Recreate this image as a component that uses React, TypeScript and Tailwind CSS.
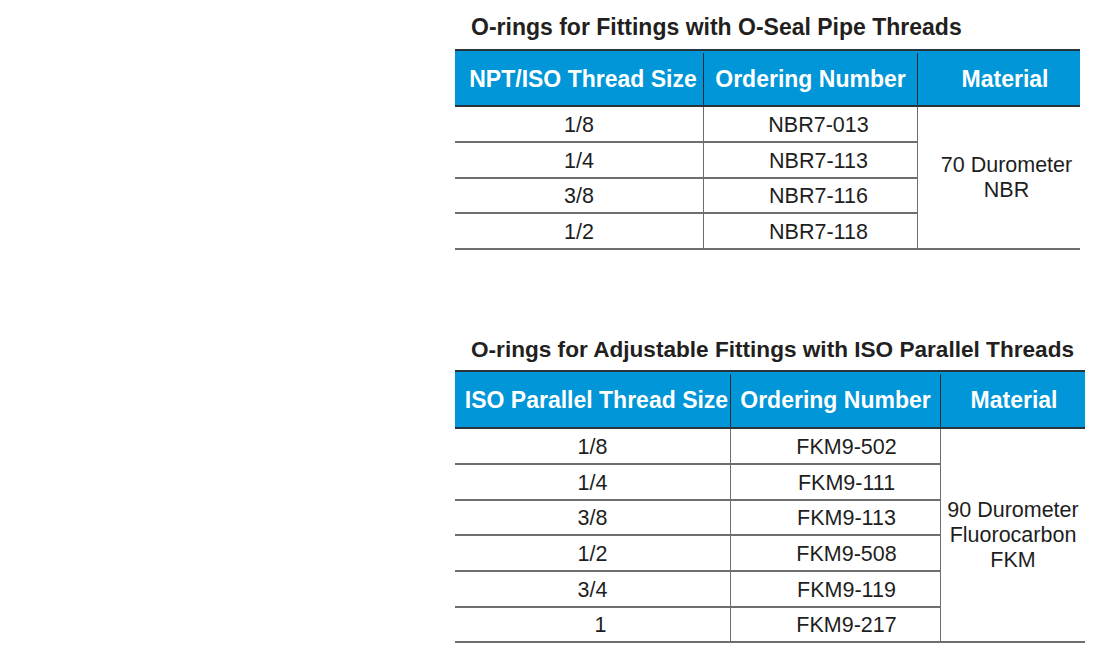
import React from "react";

const font = { fontFamily: '"Liberation Sans", Arial, sans-serif' };

function Cell({ children, className = "" }: { children: React.ReactNode; className?: string }) {
  return <div className={`flex items-center justify-center ${className}`}>{children}</div>;
}

export default function App() {
  const t1 = [
    ["1/8", "NBR7-013"],
    ["1/4", "NBR7-113"],
    ["3/8", "NBR7-116"],
    ["1/2", "NBR7-118"],
  ];
  const t2 = [
    ["1/8", "FKM9-502"],
    ["1/4", "FKM9-111"],
    ["3/8", "FKM9-113"],
    ["1/2", "FKM9-508"],
    ["3/4", "FKM9-119"],
    ["1", "FKM9-217"],
  ];
  const rowLine = "border-b-2 border-[#6e6e6e]";
  const colLine = "border-l border-[#1f1f1f]";
  return (
    <div className="min-h-[647px] w-[1095px] bg-white text-[#1e1e1e]" style={font}>
      <div className="ml-[455px] flex flex-col">
        {/* Table 1 */}
        <div className="mt-[13px] pl-[16px] text-[23px] font-bold leading-[28px] text-[#231f20]">
          O-rings for Fittings with O-Seal Pipe Threads
        </div>
        <div className="mt-[8px] w-[625px]">
          <div className="grid h-[58px] grid-cols-[248px_214px_163px] border-t-2 border-b-2 border-[#28343c] bg-[#0096d8] pt-[2px] text-[23px] font-bold text-white">
            <Cell className="pl-[8px]">NPT/ISO Thread Size</Cell>
            <Cell className="border-l border-[#1d2a33]">Ordering Number</Cell>
            <Cell className="border-l border-[#1d2a33] pl-[12px]">Material</Cell>
          </div>
          <div className="grid grid-cols-[248px_214px_163px] grid-rows-[36px_36px_35px_36px] text-[21.5px]">
            <div className={`col-start-3 row-start-1 row-span-4 flex flex-col items-center justify-center pl-[15px] leading-[25px] ${colLine} ${rowLine}`}>
              <span>70 Durometer</span>
              <span>NBR</span>
            </div>
            {t1.map(([a, b]) => (
              <React.Fragment key={b}>
                <Cell className={`${rowLine} pt-[2px]`}>{a}</Cell>
                <Cell className={`${colLine} ${rowLine} pl-[16px] pt-[2px]`}>{b}</Cell>
              </React.Fragment>
            ))}
          </div>
        </div>

        {/* Table 2 */}
        <div className="mt-[86px] pl-[16px] text-[22.6px] font-bold leading-[28px] text-[#231f20]">
          O-rings for Adjustable Fittings with ISO Parallel Threads
        </div>
        <div className="mt-[6px] w-[630px]">
          <div className="grid h-[59px] grid-cols-[275px_210px_145px] border-t-2 border-b-2 border-[#28343c] bg-[#0096d8] pt-[2px] text-[23px] font-bold text-white">
            <Cell className="pl-[8px]">ISO Parallel Thread Size</Cell>
            <Cell className="border-l border-[#1d2a33]">Ordering Number</Cell>
            <Cell className="border-l border-[#1d2a33] pl-[2px]">Material</Cell>
          </div>
          <div className="grid grid-cols-[275px_210px_145px] grid-rows-[36px_36px_35px_36px_36px_35px] text-[21.5px]">
            <div className={`col-start-3 row-start-1 row-span-6 flex flex-col items-center justify-center leading-[25px] ${colLine} ${rowLine}`}>
              <span>90 Durometer</span>
              <span>Fluorocarbon</span>
              <span>FKM</span>
            </div>
            {t2.map(([a, b]) => (
              <React.Fragment key={b}>
                <Cell className={`${rowLine} pt-[2px] ${a === "1" ? "pl-[16px]" : ""}`}>{a}</Cell>
                <Cell className={`${colLine} ${rowLine} pl-[22px] pt-[2px]`}>{b}</Cell>
              </React.Fragment>
            ))}
          </div>
        </div>
      </div>
    </div>
  );
}
